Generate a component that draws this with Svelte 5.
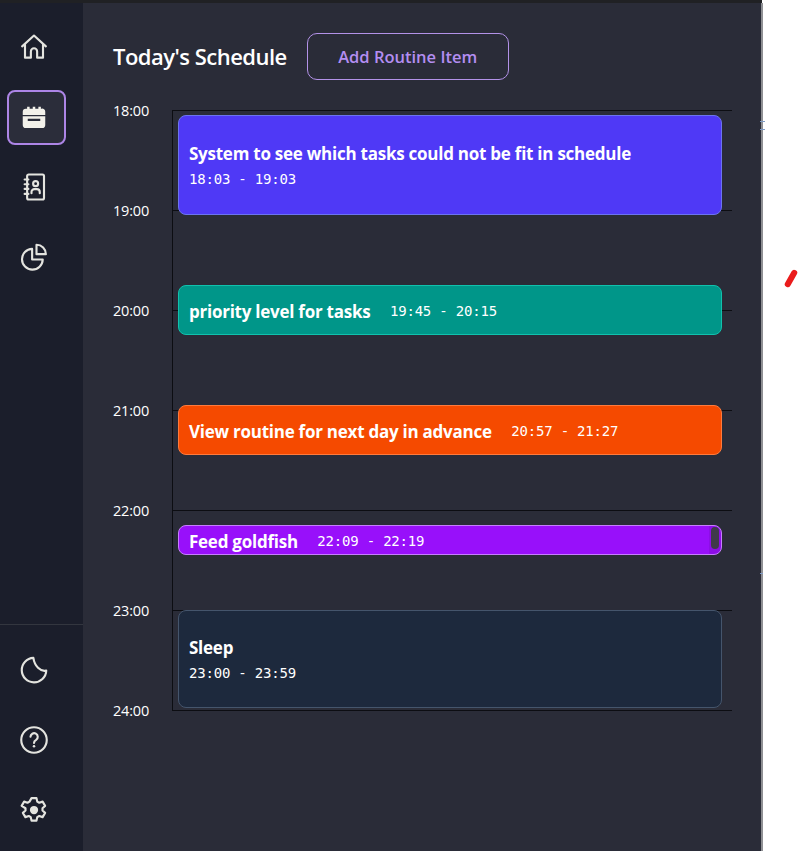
<script>
  const hours = ['18:00','19:00','20:00','21:00','22:00','23:00','24:00'];
  const events = [
    { title: 'System to see which tasks could not be fit in schedule', time: '18:03 - 19:03', top: 5, h: 100, cls: 'indigo', stack: true },
    { title: 'priority level for tasks', time: '19:45 - 20:15', top: 175, h: 50, cls: 'teal' },
    { title: 'View routine for next day in advance', time: '20:57 - 21:27', top: 295, h: 50, cls: 'orange' },
    { title: 'Feed goldfish', time: '22:09 - 22:19', top: 415, h: 30, cls: 'purple', scroll: true },
    { title: 'Sleep', time: '23:00 - 23:59', top: 500, h: 98, cls: 'navy', stack: true }
  ];
</script>

<div class="window">
  <div class="topbar"></div>
  <div class="app">
    <nav class="side">
      <div class="group">
        <button class="nav" aria-label="Home">
          <svg viewBox="0 0 24 24"><path d="M2.500 11.500 12 2.800l9.500 8.700M4.800 10v10.500h4.700V15.500a2.500 2.500 0 0 1 5 0v5h4.700V10"/></svg>
        </button>
        <button class="nav active" aria-label="Schedule">
          <svg viewBox="0 0 24 24"><path class="fill" d="M6.500 3h2v1.500h2.500V3h2v1.500h2.500V3h2v1.500h.5A2.500 2.500 0 0 1 21 7v2.500H3V7a2.500 2.500 0 0 1 2.500-2.500h1zM3 10.500h18v7a2.500 2.500 0 0 1-2.500 2.500h-13A2.500 2.500 0 0 1 3 17.500zM7 12.500v1.800h10v-1.800z"/></svg>
        </button>
        <button class="nav" aria-label="Contacts">
          <svg viewBox="0 0 24 24"><rect x="6.500" y="2" width="13.500" height="20" rx="1.200"/><circle cx="13.300" cy="9.300" r="2"/><path d="M10 17v-1a2.300 2.300 0 0 1 2.300-2.300h2a2.300 2.300 0 0 1 2.300 2.300v1M4.500 6h3M4.500 9.800h3M4.500 13.500h3M4.500 17.500h3"/></svg>
        </button>
        <button class="nav" aria-label="Statistics">
          <svg viewBox="0 0 24 24"><path d="M10.500 5.500a8.300 8.300 0 1 0 8.500 8.500h-8.500z"/><path d="M14 2.200a7.500 7.500 0 0 1 7.500 7.500H14z"/></svg>
        </button>
      </div>
      <div class="group lower">
        <button class="nav" aria-label="Theme">
          <svg viewBox="0 0 24 24"><path d="M11.500 2.300A9.800 9.800 0 1 0 21.800 12.500C17 13.500 12.500 9 11.500 2.300z"/></svg>
        </button>
        <button class="nav" aria-label="Help">
          <svg viewBox="0 0 24 24"><circle cx="12" cy="12" r="10.200"/><path d="M9.200 9.400a2.900 2.900 0 1 1 4.500 2.500c-1 .6-1.700 1.200-1.700 2.400"/><circle class="dot" cx="12" cy="17" r="1"/></svg>
        </button>
        <button class="nav" aria-label="Settings">
          <svg viewBox="0 0 24 24"><path d="M10 2.500h4l.6 2.800 1.600.9 2.700-.9 2 3.400-2.100 1.900v1.800l2.100 1.900-2 3.400-2.700-.9-1.600.9-.6 2.800h-4l-.6-2.800-1.600-.9-2.700.9-2-3.400 2.100-1.900v-1.800L2.100 8.700l2-3.400 2.700.9 1.600-.9z"/><circle class="dot" cx="12" cy="12" r="3.300"/></svg>
        </button>
      </div>
    </nav>

    <main class="main">
      <header class="head">
        <h1>Today's Schedule</h1>
        <button class="add">Add Routine Item</button>
      </header>

      <div class="schedule">
        <div class="labels">
          {#each hours as hour}
            <div class="label">{hour}</div>
          {/each}
        </div>
        <div class="timeline">
          {#each hours.slice(0, -1) as hour}
            <div class="slot"></div>
          {/each}
          {#each events as e}
            <div class={['event', e.cls, e.stack && 'stack']} style="top:{e.top}px;height:{e.h}px">
              <span class="title">{e.title}</span>
              <span class="time">{e.time}</span>
              {#if e.scroll}<span class="track"><span class="thumb"></span></span>{/if}
            </div>
          {/each}
        </div>
      </div>
    </main>

    <aside class="outside">
      <span class="tick t1"></span>
      <span class="tick t2"></span>
      <span class="tick t3"></span>
      <span class="mark"></span>
    </aside>
  </div>
</div>

<style>
  :global(body) {
    margin: 0;
    background: #fff;
    overflow: hidden;
  }
  .window {
    width: 798px;
    height: 851px;
    display: flex;
    flex-direction: column;
    font-family: "Open Sans", "Noto Sans", sans-serif;
    color: #fff;
  }
  .topbar {
    height: 3px;
    background: #202124;
    margin-right: 36px;
    flex: none;
  }
  .app {
    flex: 1;
    display: flex;
    min-height: 0;
  }
  .side {
    width: 83px;
    flex: none;
    background: #1b1e2b;
    display: flex;
    flex-direction: column;
    justify-content: space-between;
  }
  .group {
    display: flex;
    flex-direction: column;
    align-items: flex-start;
    padding: 14px 0 0 4px;
    gap: 10px;
  }
  .group.lower {
    border-top: 1px solid #33363f;
    padding-top: 15px;
    padding-bottom: 11px;
  }
  .nav {
    width: 60px;
    height: 60px;
    padding: 0;
    background: none;
    border: 2px solid transparent;
    border-radius: 8px;
    display: flex;
    align-items: center;
    justify-content: center;
  }
  .nav.active {
    width: 59px;
    height: 55px;
    margin: 3px 0 2px 3px;
    padding-right: 5px;
    box-sizing: border-box;
    background: #2b2d3a;
    border-color: #ad85e6;
  }
  .nav svg {
    width: 30px;
    height: 30px;
    flex: none;
    fill: none;
    stroke: #e4e4df;
    stroke-width: 1.700;
    stroke-linejoin: round;
    stroke-linecap: round;
  }
  .nav .fill {
    fill: #f3f1ea;
    stroke: none;
  }
  .nav .dot {
    fill: #e4e4df;
    stroke: none;
  }
  .main {
    width: 678px;
    flex: none;
    background: #2a2c38;
    box-sizing: border-box;
    padding: 30px 0 0 30px;
  }
  .head {
    display: flex;
    align-items: center;
    gap: 20px;
    height: 47px;
  }
  h1 {
    margin: 0;
    font-size: 22px;
    font-weight: 600;
    letter-spacing: -0.520px;
    white-space: nowrap;
    padding-bottom: 1px;
  }
  .add {
    width: 202px;
    height: 47px;
    background: none;
    border: 1px solid #b392e8;
    border-radius: 10px;
    color: #b48ef2;
    font: 600 16.500px "Open Sans", sans-serif;
  }
  .schedule {
    display: flex;
    margin-top: 30px;
  }
  .labels {
    width: 59px;
    flex: none;
    height: 620px;
    display: flex;
    flex-direction: column;
    justify-content: space-between;
    margin-top: -10px;
    padding-top: 0.500px;
  }
  .label {
    height: 20px;
    line-height: 20px;
    font-size: 14.500px;
    letter-spacing: -0.200px;
  }
  .timeline {
    position: relative;
    width: 559px;
    height: 600px;
    border-left: 1px solid #0c0d12;
    border-bottom: 1px solid #0c0d12;
  }
  .slot {
    height: 99px;
    border-top: 1px solid #0c0d12;
  }
  .event {
    position: absolute;
    left: 5px;
    width: 544px;
    box-sizing: border-box;
    border: 1px solid;
    border-radius: 8px;
    padding: 2px 10px 0;
    display: flex;
    align-items: center;
    gap: 19.500px;
    overflow: hidden;
  }
  .stack {
    flex-direction: column;
    align-items: flex-start;
    justify-content: center;
    gap: 6px;
    padding: 0 10px 2px;
  }
  .title {
    font-size: 17px;
    font-weight: 700;
    letter-spacing: -0.250px;
    white-space: nowrap;
  }
  .time {
    font: 14px "DejaVu Sans Mono", monospace;
    letter-spacing: -0.200px;
    white-space: nowrap;
  }
  .indigo { background: #4f39f6; border-color: #6c74f0; }
  .teal { background: #009689; border-color: #10c2ad; }
  .orange { background: #f54a00; border-color: #ff7a3c; }
  .purple { background: #9810fa; border-color: #c77dff; }
  .navy { background: #1d293d; border-color: #45556c; }
  .track {
    position: absolute;
    right: 0;
    top: 0;
    bottom: 0;
    width: 12px;
    background: rgba(0, 0, 0, 0.08);
  }
  .thumb {
    position: absolute;
    right: 2px;
    top: 1px;
    width: 8px;
    height: 22px;
    border-radius: 4px;
    background: #3f3a4a;
  }
  .outside {
    position: relative;
    flex: 1;
    background: #fff;
    border-left: 2px solid #8f9094;
  }
  .tick {
    position: absolute;
    left: -3px;
    width: 5px;
    height: 1px;
    background: #7f9bc4;
  }
  .t1 { top: 118px; }
  .t2 { top: 126px; }
  .t3 { top: 570px; width: 3px; }
  .mark {
    position: absolute;
    left: 25px;
    top: 266px;
    width: 6px;
    height: 19px;
    border-radius: 3px;
    background: #ea1c1c;
    transform: rotate(30deg);
  }
</style>
